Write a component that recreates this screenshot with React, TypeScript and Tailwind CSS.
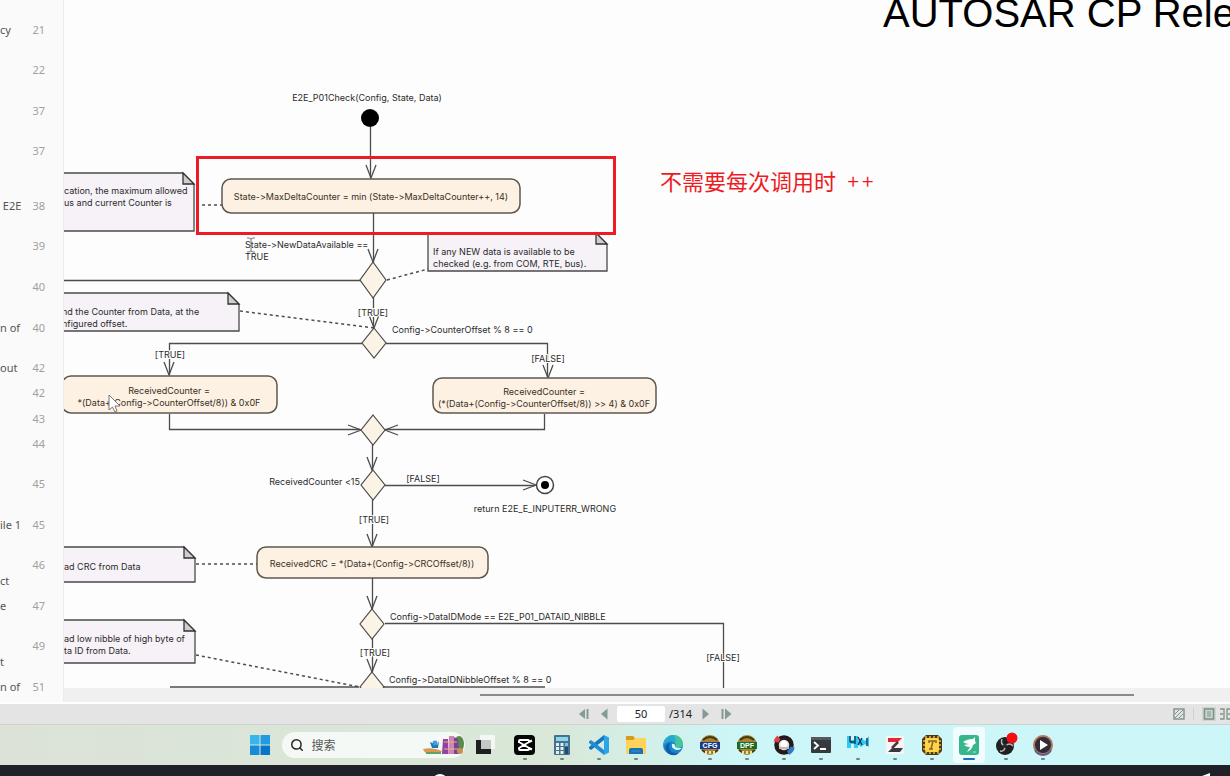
import type { ReactNode } from "react";
import { Search } from "lucide-react";

type OutlineRow = { page: number; label: string; more?: string; size: string };

const SINGLE = "h-[25px]";
const DOUBLE = "h-[41px]";
const TRIPLE = "h-[55px]";

const outline: OutlineRow[] = [
  { page: 21, label: "cy", size: "h-10" },
  { page: 22, label: "", size: DOUBLE },
  { page: 37, label: "", size: "h-10" },
  { page: 37, label: "", size: TRIPLE },
  { page: 38, label: " E2E", size: "h-10" },
  { page: 39, label: "", size: DOUBLE },
  { page: 40, label: "", size: DOUBLE },
  { page: 40, label: "n of", size: "h-10" },
  { page: 42, label: "out", size: SINGLE },
  { page: 42, label: "", size: "h-[26px]" },
  { page: 43, label: "", size: SINGLE },
  { page: 44, label: "", size: "h-10" },
  { page: 45, label: "", size: DOUBLE },
  { page: 45, label: "ile 1", size: "h-10" },
  { page: 46, label: "", more: "ct", size: DOUBLE },
  { page: 47, label: "e", size: "h-10" },
  { page: 49, label: "", more: "t", size: DOUBLE },
  { page: 51, label: "n of", size: SINGLE },
];

function Outline() {
  return (
    <nav aria-label="Outline" className="w-16 shrink-0 overflow-hidden border-r border-[#ececec] bg-[#fafafa] pt-[22px] font-['Noto_Sans',sans-serif] text-[11px] leading-4">
      <ul>
        {outline.map((row, i) => (
          <li key={i} className={`flex ${row.size}`}>
            <a href={`#page-${row.page}`} className="flex w-full">
              <span className="flex w-5 shrink-0 flex-col whitespace-pre text-[#555]">
                <span className="h-4">{row.label}</span>
                <span>{row.more}</span>
              </span>
              <span className="w-[25px] shrink-0 text-right text-[#a0a0a0]">{row.page}</span>
            </a>
          </li>
        ))}
      </ul>
    </nav>
  );
}

function Note({ x, y, w, h, lines, tx, ty }: { x: number; y: number; w: number; h: number; lines: string[]; tx: number; ty: number }) {
  const r = x + w;
  return (
    <g>
      <path d={`M${x} ${y}H${r - 11}L${r} ${y + 11}V${y + h}H${x}Z`} fill="#f6f2f7" stroke="#4a4a4a" strokeWidth="1.3" />
      <path d={`M${r - 11} ${y}V${y + 11}H${r}Z`} fill="#cfcdd0" stroke="#333" strokeWidth="1.3" />
      {lines.map((t, i) => (
        <text key={t} x={tx} y={ty + i * 12}>{t}</text>
      ))}
    </g>
  );
}

function Action({ x, y, w, h, lines, cx }: { x: number; y: number; w: number; h: number; lines: string[]; cx: number }) {
  const first = y + Math.round(h / 2) + (lines.length === 1 ? 4 : -1);
  return (
    <g>
      <rect x={x} y={y} width={w} height={h} rx="9" fill="#fcf1e3" stroke="#5c5850" strokeWidth="1.5" />
      {lines.map((t, i) => (
        <text key={t} x={cx} y={first + i * 12} textAnchor="middle" fill="#3a2f24">{t}</text>
      ))}
    </g>
  );
}

function Decision({ x, y, rx = 12, ry = 15 }: { x: number; y: number; rx?: number; ry?: number }) {
  return <path d={`M${x} ${y - ry}L${x + rx} ${y}L${x} ${y + ry}L${x - rx} ${y}Z`} fill="#faf3e6" stroke="#4a4a4a" strokeWidth="1.2" />;
}

function Flow({ d }: { d: string }) {
  return <path d={d} fill="none" stroke="#4d4d4d" strokeWidth="1.3" />;
}

function Head({ x, y, dir = "down" }: { x: number; y: number; dir?: "down" | "left" | "right" }) {
  const d =
    dir === "down"
      ? `M${x - 5} ${y - 13}L${x} ${y}L${x + 5} ${y - 13}`
      : dir === "right"
        ? `M${x - 13} ${y - 5}L${x} ${y}L${x - 13} ${y + 5}`
        : `M${x + 13} ${y - 5}L${x} ${y}L${x + 13} ${y + 5}`;
  return <path d={d} fill="none" stroke="#4d4d4d" strokeWidth="1.3" />;
}

function Guard({ x, y, children }: { x: number; y: number; children: string }) {
  return <text x={x} y={y} textAnchor="middle" stroke="#fdfdfd" strokeWidth="2" paintOrder="stroke">{children}</text>;
}

function ActivityDiagram() {
  return (
    <svg width="700" height="704" viewBox="64 0 700 704" className="block shrink-0 font-[Inter,'Liberation_Sans',sans-serif] text-[9px] [font-feature-settings:'calt'_0]" fill="#2b2b2b" role="img" aria-label="E2E_P01Check activity diagram">
      <text x="367" y="101" textAnchor="middle">E2E_P01Check(Config, State, Data)</text>
      <circle cx="370" cy="118" r="9" fill="#000" />
      <Flow d="M370.500 127V178" />
      <Head x={371} y={178} />
      <Note x={40} y={173} w={154} h={58} tx={64} ty={194} lines={["cation, the maximum allowed", "us and current Counter is"]} />
      <g fill="none" stroke="#4d4d4d" strokeWidth="1.5" strokeDasharray="3 3">
        <path d="M196 205H222" />
        <path d="M387 280L428 269" />
        <path d="M240 311L374 328" />
        <path d="M196 564H257" />
        <path d="M196 655L360 687" />
      </g>
      <Action x={222} y={179} w={298} h={34} cx={371} lines={["State->MaxDeltaCounter = min (State->MaxDeltaCounter++, 14)"]} />

      <Flow d="M373.500 213V263M64 280.500H361M373.500 297V328" />
      <Head x={373} y={262} />
      <text x="245" y="248">State-&gt;NewDataAvailable ==</text>
      <text x="245" y="260">TRUE</text>
      <path d="M247 238h2l2 1l2-1h2M251 239v12M247 252h2l2-1l2 1h2" fill="none" stroke="#777" strokeWidth="1" />
      <Note x={428} y={233} w={179} h={38} tx={433} ty={255} lines={["If any NEW data is available to be", "checked (e.g. from COM, RTE, bus)."]} />
      <Decision x={373} y={280} rx={13} ry={18} />
      <Note x={40} y={293} w={199} h={38} tx={62} ty={315} lines={["nd the Counter from Data, at the", "nfigured offset."]} />
      <Head x={374} y={328} />
      <Guard x={373} y={316}>[TRUE]</Guard>

      <Flow d="M362 343.500H169.500V375M386 343.500H547.500V377" />
      <Decision x={374} y={343} />
      <text x="392" y="333">Config-&gt;CounterOffset % 8 == 0</text>
      <Head x={169} y={375} />
      <Head x={548} y={378} />
      <Guard x={170} y={358}>[TRUE]</Guard>
      <Guard x={548} y={362}>[FALSE]</Guard>

      <Action x={62} y={376} w={215} h={37} cx={169} lines={["ReceivedCounter =", "*(Data+(Config->CounterOffset/8)) & 0x0F"]} />
      <Action x={433} y={378} w={223} h={35} cx={544} lines={["ReceivedCounter =", "(*(Data+(Config->CounterOffset/8)) >> 4) & 0x0F"]} />
      <path d="M109 395V410L112.500 407L115 412L117 411L115 406H120Z" fill="#fff" stroke="#777" strokeWidth="1" />

      <Flow d="M169.500 414V429.500H360M544.500 414V429.500H385M372.500 445V470M372.500 500V546" />
      <Head x={361} y={430} dir="right" />
      <Head x={385} y={430} dir="left" />
      <Decision x={373} y={430} />
      <Head x={372} y={470} />
      <Decision x={373} y={485} />
      <text x="360" y="485" textAnchor="end">ReceivedCounter &lt;15</text>
      <Flow d="M385 485.500H535" />
      <Head x={536} y={485} dir="right" />
      <text x="423" y="482" textAnchor="middle">[FALSE]</text>
      <circle cx="545" cy="485" r="8.500" fill="#fff" stroke="#444" strokeWidth="1.5" />
      <circle cx="545" cy="485" r="4" fill="#000" />
      <text x="545" y="512" textAnchor="middle">return E2E_E_INPUTERR_WRONG</text>
      <Head x={372} y={547} />
      <Guard x={374} y={523}>[TRUE]</Guard>

      <Note x={40} y={547} w={155} h={35} tx={64} ty={570} lines={["ad CRC from Data"]} />
      <Action x={257} y={547} w={231} h={31} cx={372} lines={["ReceivedCRC = *(Data+(Config->CRCOffset/8))"]} />
      <Flow d="M372.500 578V609M385 623.500H723.500V690M372.500 639V672" />
      <Head x={372} y={609} />
      <Decision x={372} y={624} />
      <text x="390" y="620">Config-&gt;DataIDMode == E2E_P01_DATAID_NIBBLE</text>
      <Guard x={723} y={661}>[FALSE]</Guard>
      <Head x={372} y={672} />
      <Guard x={375} y={656}>[TRUE]</Guard>
      <Note x={40} y={620} w={155} h={43} tx={64} ty={642} lines={["ad low nibble of high byte of", "ta ID from Data."]} />
      <Flow d="M170 687H359M384 687H545" />
      <Decision x={372} y={687} />
      <text x="389" y="683">Config-&gt;DataIDNibbleOffset % 8 == 0</text>
    </svg>
  );
}

function PageView() {
  return (
    <main className="relative flex min-w-0 flex-1 flex-col">
      <div className="relative min-h-0 flex-1 overflow-hidden bg-[#fdfdfd]">
        <ActivityDiagram />
        <h1 className="absolute top-[-7px] left-[819px] font-['Liberation_Sans',sans-serif] text-[40px] leading-10 whitespace-nowrap text-black">AUTOSAR CP Release</h1>
        <div className="absolute top-[156px] left-[132px] h-[79px] w-[420px] border-3 border-[#ed1c24]" />
        <p className="absolute top-[166px] left-[596px] flex gap-[10px] font-['Noto_Sans_CJK_SC',sans-serif] text-[22px] leading-7 whitespace-nowrap text-[#ed1c24]">
          <span>不需要每次调用时</span>
          <span className="font-[Inter,sans-serif] font-light">++</span>
        </p>
      </div>
      <div className="flex h-[14px] shrink-0 items-center bg-[#f0f0f0] pr-24 pl-[416px]">
        <div className="h-[2px] w-full bg-[#8a8a8a]" />
      </div>
    </main>
  );
}

function NavButton({ label, children }: { label: string; children: ReactNode }) {
  return (
    <button type="button" aria-label={label} className="flex h-4 w-4 items-center justify-center text-[#839a97]">
      <svg width="12" height="12" viewBox="0 0 12 12" fill="currentColor">{children}</svg>
    </button>
  );
}

function StatusBar() {
  return (
    <div className="relative flex h-[23px] shrink-0 items-center justify-center border-t-2 border-b border-t-white border-b-[#cfd3d0] bg-[#e4e4e4] pl-20">
      <div className="flex items-center gap-1 font-['Noto_Sans',sans-serif] text-[11px] text-[#222]">
        <NavButton label="First page"><path d="M7 1V11L1 6Z" /><path d="M8.500 1h2v10h-2z" /></NavButton>
        <NavButton label="Previous page"><path d="M9.500 0.500V11.500L3 6Z" /></NavButton>
        <input aria-label="Page number" defaultValue="50" className="ml-px h-4 w-12 rounded-xs bg-white text-center leading-4" />
        <span className="w-[25px] leading-4">/314</span>
        <NavButton label="Next page"><path d="M2.500 0.500V11.500L9 6Z" /></NavButton>
        <NavButton label="Last page"><path d="M1.500 1h2v10h-2z" /><path d="M5 0.500V11.500L11.500 6Z" /></NavButton>
      </div>
      <div className="absolute inset-y-0 right-0 flex items-center text-[#829188]">
        <button type="button" aria-label="Background" className="mr-2">
          <svg width="12" height="12" viewBox="0 0 12 12" fill="none" stroke="currentColor" strokeWidth="1.400"><rect x="1" y="1" width="10" height="10" /><path d="M2 6L6 2M2 10L10 2M6 10L10 6" strokeWidth="1" /></svg>
        </button>
        <span className="h-3 w-px bg-[#d0d0d0]" />
        <button type="button" aria-label="Single page" className="ml-2 bg-[#cbd8d0] p-px">
          <svg width="12" height="12" viewBox="0 0 12 12" fill="none" stroke="currentColor"><rect x="1.500" y="1" width="9" height="10" strokeWidth="1.600" /><path d="M4 4h4M4 6h4M4 8h4" /></svg>
        </button>
        <button type="button" aria-label="Two pages" className="ml-1">
          <svg width="10" height="12" viewBox="0 0 10 12" fill="none" stroke="currentColor" strokeWidth="1.300"><path d="M0 1h4v10H0M0 6h3M10 1H7v10h3M8 6h2" /></svg>
        </button>
      </div>
    </div>
  );
}

type AppItem = { name: string; icon: ReactNode; running?: boolean; active?: boolean };

const apps: AppItem[] = [
  {
    name: "CapCut",
    running: true,
    icon: <><rect x="0" y="1" width="21" height="20" rx="4" fill="#050505" /><path d="M5 9V7Q5 6 6 6H14Q15 6 15 7V8L5 14V15Q5 16 6 16H14Q15 16 15 15V14L5 8M15 14L18 15.500M15 8L18 6.500" fill="none" stroke="#fff" strokeWidth="2" /></>,
  },
  {
    name: "Calculator",
    running: true,
    icon: <><rect x="3" y="1" width="16" height="20" rx="1" fill="#45738c" /><rect x="5" y="3" width="12" height="4" fill="#8bd5ef" /><path d="M5 9h3v3H5zM9.500 9h3v3h-3zM5 13h3v3H5zM9.500 13h3v3h-3zM5 17h3v3H5zM9.500 17h3v3h-3z" fill="#e2eef2" /><path d="M14 9h3v3h-3z" fill="#74c8e8" /><path d="M14 13h3v7h-3z" fill="#1d4d76" /></>,
  },
  {
    name: "Visual Studio Code",
    running: true,
    icon: <><path d="M16 1L21 3.500V18.500L16 21Z" fill="#2ba4e8" /><path d="M16 1V6L3 16L1 14.500V13Z" fill="#1478bd" /><path d="M16 21V16L3 6L1 7.500V9Z" fill="#1d8ed3" /></>,
  },
  {
    name: "File Explorer",
    running: true,
    icon: <><path d="M1 3Q1 2 2 2H8L10 4H20Q21 4 21 5V10H1Z" fill="#d99a18" /><path d="M1 6H8L10 4H21V19Q21 20 20 20H2Q1 20 1 19Z" fill="#ffd25a" /><path d="M4 20V16Q4 14 6 14H16Q18 14 18 16V20Z" fill="#1772b8" /><path d="M7 17H15" stroke="#3f8fc6" strokeWidth="1" /></>,
  },
  {
    name: "Edge",
    icon: <><circle cx="11" cy="11" r="10" fill="#1785cb" /><path d="M2 8Q5 1 11 1C18 1 21 6 21 10C21 14 15 15 13 13C15 10 12 7 9 7Q5 7 2 10Z" fill="#49c49a" /><path d="M2 8Q5 2 11 1Q15 4 13 9Q10 6 6 8Q3 9 1 12Z" fill="#24a9d7" /><path d="M8 9C5 14 9 21 17 19Q13 23 7 20C2 16 3 9 8 9Z" fill="#125ca6" /><path d="M10 10Q13 9 13 12Q13 14.500 20 14Q17 17 13 15.500Q9 14 10 10Z" fill="#d8f7f5" /></>,
  },
  {
    name: "CFG editor",
    running: true,
    icon: <><circle cx="11" cy="11" r="10" fill="#a8842e" /><path d="M4 6Q11 0 18 6M3 16L8 19M14 19L19 16" stroke="#443711" strokeWidth="2" fill="none" /><path d="M1 8H21V15H1Z" fill="#173b91" /><text x="11" y="14" textAnchor="middle" fontSize="7" fontWeight="bold" fill="#fff">CFG</text><path d="M6 17h2v3H6zM10 17h2v3h-2zM14 17h2v3h-2z" fill="#f0e1a0" /></>,
  },
  {
    name: "DPF editor",
    running: true,
    icon: <><circle cx="11" cy="11" r="10" fill="#a8842e" /><path d="M4 6Q11 0 18 6M3 16L8 19M14 19L19 16" stroke="#443711" strokeWidth="2" fill="none" /><path d="M1 8H21V15H1Z" fill="#1c6d28" /><text x="11" y="14" textAnchor="middle" fontSize="7" fontWeight="bold" fill="#fff">DPF</text><path d="M6 17h2v3H6zM10 17h2v3h-2zM14 17h2v3h-2z" fill="#f0e1a0" /></>,
  },
  {
    name: "Sync tool",
    running: true,
    icon: <><circle cx="11" cy="11" r="7.500" fill="#ddd" stroke="#25191c" strokeWidth="4.500" /><path d="M3 8A9 9 0 0 1 6 3.500" fill="none" stroke="#e23d42" strokeWidth="5" /><path d="M19.500 13A9 9 0 0 1 15 19" fill="none" stroke="#3179c8" strokeWidth="4.500" /><circle cx="11" cy="10" r="3.500" fill="#fff" /><path d="M6 14H16" stroke="#c7b5ac" strokeWidth="2" /></>,
  },
  {
    name: "Terminal",
    running: true,
    icon: <><rect x="1" y="3" width="20" height="16" rx="1" fill="#36393d" /><path d="M1 3H21V6H1Z" fill="#55595d" /><path d="M4 8L8 11.500L4 15M10 15H16" fill="none" stroke="#fff" strokeWidth="1.800" /></>,
  },
  {
    name: "Hex editor",
    running: true,
    icon: <><path d="M0 2H4V6H7V2H11V7L14 4L18 7L22 2V13L18 10L14 13L11 10V14H7V10H4V14H0Z" fill="#2ec9f5" /><path d="M3 2V8M3 8H8M8 2V10M11 3L15 11M15 4L11 11M20 4V12" stroke="#16334d" strokeWidth="1.300" fill="none" /></>,
  },
  {
    name: "ZCANPRO",
    running: true,
    icon: <><rect x="2" y="2" width="18" height="18" rx="1" fill="#f8f5f5" /><path d="M4 4H18L14 8H4Z" fill="#d92c39" /><path d="M14 8L8 14" stroke="#5b3037" strokeWidth="2.500" /><path d="M8 14H19L16 18H4Z" fill="#343a40" /></>,
  },
  {
    name: "Trace tool",
    running: true,
    icon: <><path d="M5 1H17L21 5V17L17 21H5L1 17V5Z" fill="#4c3816" /><path d="M5 2V5M9 2V5M13 2V5M17 2V5M5 17V20M9 17V20M13 17V20M17 17V20M2 7H5M2 11H5M2 15H5M17 7H20M17 11H20M17 15H20" stroke="#e7b83b" strokeWidth="1.500" /><rect x="4" y="4" width="14" height="14" rx="2" fill="#ffd34c" /><path d="M8 9V7H15V9M12 7L10 15M8 15H12" fill="none" stroke="#866523" strokeWidth="1.500" /></>,
  },
  {
    name: "PDF reader",
    active: true,
    icon: <><rect x="1" y="1" width="20" height="20" rx="3" fill="#38b68b" /><path d="M5 8Q9 5 15 5L17 3V7L18 9L15 11Q14 16 9 18L12 13Q8 13 6 11L11 10Q8 10 5 8Z" fill="#fff" /><path d="M15 18H18" stroke="#a9e5ce" /></>,
  },
  {
    name: "OBS Studio",
    running: true,
    icon: <><circle cx="10" cy="12" r="9" fill="#202022" /><path d="M10 12Q5 10 7 5M10 12Q15 8 18 12M10 12Q10 18 5 17" fill="none" stroke="#b5b5b5" strokeWidth="1.500" /><circle cx="10" cy="12" r="2" fill="#29292b" /><circle cx="17" cy="4" r="5.500" fill="#f30e12" /></>,
  },
  {
    name: "Media player",
    running: true,
    icon: <><circle cx="11" cy="11" r="9" fill="#302b35" stroke="#ad765d" strokeWidth="2" /><path d="M3 16A9 9 0 0 0 19 16" fill="none" stroke="#665c8a" strokeWidth="2" /><path d="M8 6L16 11L8 16Z" fill="#fff" /></>,
  },
];

function AppButton({ item }: { item: AppItem }) {
  return (
    <button type="button" aria-label={item.name} className={`flex h-9 w-8 flex-col items-center justify-between rounded pt-[7px] pb-[3px] ${item.active ? "bg-white/70" : ""}`}>
      <svg width="22" height="22" viewBox="0 0 22 22" className="shrink-0 overflow-visible font-['Liberation_Sans',sans-serif]">{item.icon}</svg>
      <span className={`h-[2px] rounded-full ${item.active ? "w-3 bg-[#1671c4]" : item.running ? "w-1 bg-[#6f8583]" : "w-1"}`} />
    </button>
  );
}

function Taskbar() {
  return (
    <footer className="flex h-10 shrink-0 items-center justify-center bg-linear-to-r from-[#dce2d8] via-[#d9e8d8] via-45% to-[#cdf6f8] to-60% pl-[78px]">
      <button type="button" aria-label="Start" className="mr-3">
        <svg width="20" height="20" viewBox="0 0 20 20"><path d="M0 0h9.500v9.500H0z" fill="#35b7ee" /><path d="M10.500 0H20v9.500h-9.500z" fill="#239be0" /><path d="M0 10.500h9.500V20H0z" fill="#168bd8" /><path d="M10.500 10.500H20V20h-9.500z" fill="#0875c7" /></svg>
      </button>
      <label className="flex h-[26px] w-[183px] items-center rounded-full bg-[#f5f9f6] pl-2">
        <Search className="size-[14px] shrink-0 text-[#222]" strokeWidth={2.5} />
        <input type="search" aria-label="搜索" placeholder="搜索" className="ml-2 min-w-0 flex-1 bg-transparent font-['Noto_Sans_CJK_SC',sans-serif] text-[12px] outline-none placeholder:text-[#555]" />
        <svg width="44" height="22" viewBox="0 0 44 22" className="shrink-0"><path d="M2 15Q12 13 21 17L19 20H8Q3 19 2 15Z" fill="#d79a55" /><path d="M5 19H20" stroke="#5aa660" strokeWidth="2" /><path d="M9 8L16 11L18 7L17 14H11Z" fill="#2176ba" /><circle cx="14" cy="9" r="2.500" fill="#3d9ede" /><ellipse cx="38" cy="10" rx="5" ry="8" fill="#5b8a4b" /><path d="M22 5H27V20H21Z" fill="#9142a5" /><path d="M28 2H33V20H27Z" fill="#d183bb" /><path d="M33 3L37 5L38 20H33Z" fill="#76439b" /><path d="M23 8H36M23 15H37" stroke="#e9bc61" strokeWidth="1" /><circle cx="39" cy="17" r="3" fill="#cc8f4e" /></svg>
      </label>
      <button type="button" aria-label="Task view" className="mr-2 ml-1 flex w-8 justify-center">
        <svg width="22" height="22" viewBox="0 0 22 22"><rect x="6" y="1" width="15" height="14" rx="1" fill="#f5f7f5" /><path d="M2 6H7V15H17V20H2Z" fill="#1d1f20" /><rect x="7" y="6" width="10" height="9" fill="#c4c8c6" /></svg>
      </button>
      <div className="flex items-center gap-[5px]">
        {apps.map((item) => <AppButton key={item.name} item={item} />)}
      </div>
    </footer>
  );
}

export default function App() {
  return (
    <div className="flex h-screen flex-col overflow-hidden bg-[#fdfdfd]">
      <div className="flex min-h-0 flex-1">
        <Outline />
        <PageView />
      </div>
      <StatusBar />
      <Taskbar />
      <div className="relative h-[11px] shrink-0 overflow-hidden bg-[#202029]">
        <span className="absolute top-[9px] left-[432px] h-4 w-4 rounded-full bg-white" />
        <svg width="12" height="4" viewBox="0 0 12 4" className="absolute right-4 bottom-0"><path d="M0 4L8 1V4Z" fill="#fff" /></svg>
      </div>
    </div>
  );
}
